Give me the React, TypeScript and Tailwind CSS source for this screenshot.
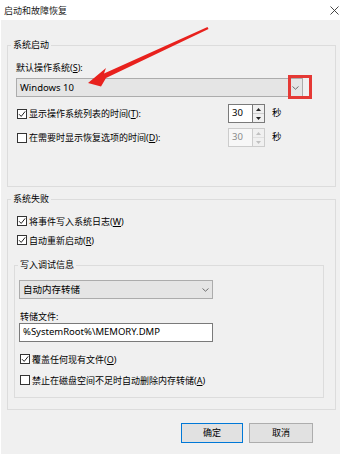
import type { ReactNode } from "react";

const font = { fontFamily: '"Noto Sans", "Noto Sans CJK SC", sans-serif' };

function Check({ checked }: { checked?: boolean }) {
  return (
    <span className="w-[10px] h-[10px] border border-[#333333] bg-white flex items-center justify-center shrink-0">
      {checked && (
        <svg width="8" height="8" viewBox="0 0 8 8">
          <path d="M1 4.2 L3.2 6.4 L7.2 1.4" stroke="#222" strokeWidth="1" fill="none" />
        </svg>
      )}
    </span>
  );
}

function Chevron() {
  return (
    <svg width="7" height="4" viewBox="0 0 7 4" className="shrink-0">
      <path d="M0.5 0.5 L3.5 3.2 L6.5 0.5" stroke="#606060" strokeWidth="0.9" fill="none" />
    </svg>
  );
}

function Combo({ text, w }: { text: string; w: string }) {
  return (
    <div className={`${w} h-[19px] bg-[#e5e5e5] border border-[#acacac] flex items-center justify-between pl-[3px] pr-[3px]`}>
      <span className="text-[9.5px] leading-none">{text}</span>
      <Chevron />
    </div>
  );
}

function Spin({ disabled }: { disabled?: boolean }) {
  const b = disabled ? "border-[#cccccc]" : "border-[#7a7a7a]";
  const arrow = disabled ? "#c0c0c0" : "#222";
  return (
    <div className="flex h-[19px] w-[37px]">
      <div
        className={`w-[25px] border ${b} ${disabled ? "bg-[#f7f7f7] text-[#8a8a8a]" : "bg-white text-black"} flex items-center pl-[3px] text-[9.5px]`}
      >
        30
      </div>
      <div className={`w-[12px] border-y border-r ${b} flex flex-col`}>
        <div className={`flex-1 flex items-center justify-center border-b ${disabled ? "border-[#e0e0e0]" : "border-[#cfcfcf]"} bg-[#f0f0f0]`}>
          <svg width="5" height="3" viewBox="0 0 5 3">
            <path d="M0 3 L2.5 0 L5 3 Z" fill={arrow} />
          </svg>
        </div>
        <div className="flex-1 flex items-center justify-center bg-[#f0f0f0]">
          <svg width="5" height="3" viewBox="0 0 5 3">
            <path d="M0 0 L2.5 3 L5 0 Z" fill={arrow} />
          </svg>
        </div>
      </div>
    </div>
  );
}

function CheckRow({ checked, children, className = "" }: { checked?: boolean; children: ReactNode; className?: string }) {
  return (
    <div className={`h-[14px] flex items-center gap-[2px] ${className}`}>
      <Check checked={checked} />
      <span className="text-[9px] leading-none whitespace-nowrap">{children}</span>
    </div>
  );
}

function Legend({ children }: { children: ReactNode }) {
  return <legend className="ml-[3px] px-[2px] text-[9px] leading-[12px]">{children}</legend>;
}

export default function App() {
  return (
    <div className="w-[340px] h-[458px] bg-white relative overflow-hidden text-black" style={font}>
      {/* title bar */}
      <div className="h-[20px] flex items-center justify-between pl-[4px] pr-[1px]">
        <span className="text-[9px] leading-none text-[#1a1a1a]">启动和故障恢复</span>
        <svg width="9" height="9" viewBox="0 0 9 9">
          <path d="M0.5 0.5 L8.5 8.5 M8.5 0.5 L0.5 8.5" stroke="#333" strokeWidth="0.9" />
        </svg>
      </div>

      <div className="ml-[1px] h-[434px] bg-[#f0f0f0] pt-[19px] pl-[6px]">
        {/* 系统启动 */}
        <fieldset className="w-[329px] h-[148px] border border-[#dcdcdc]">
          <Legend>系统启动</Legend>
          <div className="pl-[8px]">
            <div className="mt-[11px] h-[12px] text-[9px] leading-[12px]">
              默认操作系统(<u>S</u>):
            </div>
            <div className="mt-[4px]">
              <Combo text="Windows 10" w="w-[287px]" />
            </div>
            <div className="mt-[7px] h-[19px] grid grid-cols-[212px_37px_auto] items-center">
              <CheckRow checked className="ml-[1px]">
                显示操作系统列表的时间(<u>T</u>):
              </CheckRow>
              <Spin />
              <span className="ml-[7px] text-[9.5px]">秒</span>
            </div>
            <div className="mt-[5px] h-[19px] grid grid-cols-[212px_37px_auto] items-center">
              <CheckRow className="ml-[1px]">
                在需要时显示恢复选项的时间(<u>D</u>):
              </CheckRow>
              <Spin disabled />
              <span className="ml-[7px] text-[9.5px]">秒</span>
            </div>
          </div>
        </fieldset>

        {/* 系统失败 */}
        <fieldset className="mt-[6px] w-[329px] h-[217px] border border-[#dcdcdc]">
          <Legend>系统失败</Legend>
          <div className="pl-[6px]">
            <CheckRow checked className="mt-[9px] ml-[3px]">
              将事件写入系统日志(<u>W</u>)
            </CheckRow>
            <CheckRow checked className="mt-[5px] ml-[3px]">
              自动重新启动(<u>R</u>)
            </CheckRow>

            <fieldset className="mt-[12px] w-[310px] h-[139px] border border-[#dcdcdc]">
              <Legend>写入调试信息</Legend>
              <div className="pl-[4px]">
                <div className="mt-[9px]">
                  <Combo text="自动内存转储" w="w-[194px]" />
                </div>
                <div className="mt-[12px] ml-[1px] h-[12px] text-[9px] leading-[12px]">转储文件:</div>
                <div className="w-[194px] h-[19px] border border-[#7a7a7a] bg-white flex items-center pl-[3px] text-[9.5px]">
                  %SystemRoot%\MEMORY.DMP
                </div>
                <CheckRow checked className="mt-[10px] ml-[1px]">
                  覆盖任何现有文件(<u>O</u>)
                </CheckRow>
                <CheckRow className="mt-[7px] ml-[1px]">
                  禁止在磁盘空间不足时自动删除内存转储(<u>A</u>)
                </CheckRow>
              </div>
            </fieldset>
          </div>
        </fieldset>

        {/* buttons */}
        <div className="mt-[13px] flex justify-end gap-[6px] mr-[27px]">
          <button className="w-[62px] h-[20px] border border-[#0078d7] bg-[#e1e1e1] text-[9px]">确定</button>
          <button className="w-[64px] h-[20px] border border-[#adadad] bg-[#e1e1e1] text-[9px]">取消</button>
        </div>
      </div>

      {/* annotations */}
      <div className="absolute left-[288px] top-[75px] w-[24px] h-[24px] border-[3px] border-[#e53935]" />
      <svg className="absolute left-0 top-0 pointer-events-none" width="340" height="458">
        <polygon
          points="88,83 106,68 104,73.5 207.5,27 208.5,29 106,78 101,86.5"
          fill="#e8211d"
        />
      </svg>
    </div>
  );
}
